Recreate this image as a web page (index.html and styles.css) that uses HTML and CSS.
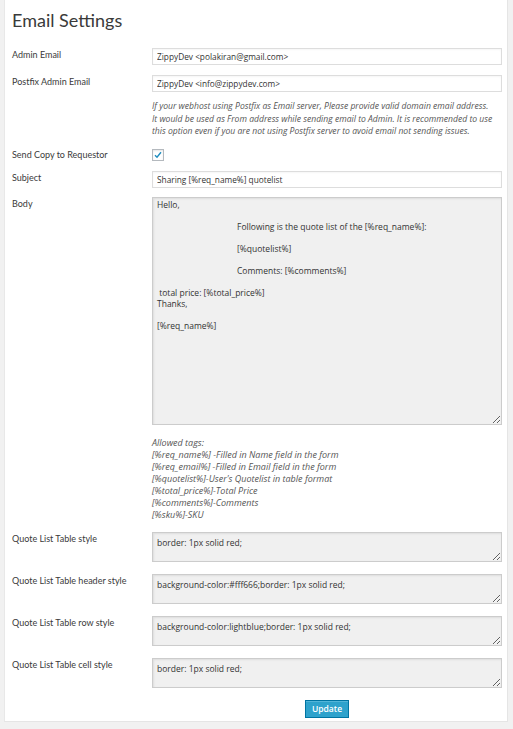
FILE: index.html
```html
<!DOCTYPE html>
<html>
<head>
<meta charset="utf-8">
<link rel="stylesheet" href="styles.css">
</head>
<body>
<div class="panel">
  <h1 class="title">Email Settings</h1>
  <form class="form">
    <div class="row r-admin">
      <label class="lbl">Admin Email</label>
      <div class="field"><input class="txt" type="text" value="ZippyDev <polakiran@gmail.com>"></div>
    </div>
    <div class="row r-postfix">
      <label class="lbl">Postfix Admin Email</label>
      <div class="field">
        <input class="txt" type="text" value="ZippyDev <info@zippydev.com>">
        <p class="desc">If your webhost using Postfix as Email server, Please provide valid domain email address.<br>It would be used as From address while sending email to Admin. It is recommended to use this option even if you are not using Postfix server to avoid email not sending issues.</p>
      </div>
    </div>
    <div class="row r-copy">
      <label class="lbl">Send Copy to Requestor</label>
      <div class="field"><span class="check"><svg width="8" height="8" viewBox="0 0 8 8"><path d="M1 4.3 L3 6.3 L7 1.2" fill="none" stroke="#1e8cbe" stroke-width="1.4"/></svg></span></div>
    </div>
    <div class="row r-subject">
      <label class="lbl">Subject</label>
      <div class="field"><input class="txt" type="text" value="Sharing [%req_name%] quotelist"></div>
    </div>
    <div class="row r-body">
      <label class="lbl">Body</label>
      <div class="field">
        <textarea class="area body-area">Hello,

	Following is the quote list of the [%req_name%]:

	[%quotelist%]

	Comments: [%comments%]

 total price: [%total_price%]
Thanks,

[%req_name%]</textarea>
        <p class="tags">Allowed tags:<br>[%req_name%] -Filled in Name field in the form<br>[%req_email%] -Filled in Email field in the form<br>[%quotelist%]-User's Quotelist in table format<br>[%total_price%]-Total Price<br>[%comments%]-Comments<br>[%sku%]-SKU</p>
      </div>
    </div>
    <div class="row r-style">
      <label class="lbl">Quote List Table style</label>
      <div class="field"><textarea class="area small">border: 1px solid red;</textarea></div>
    </div>
    <div class="row r-style">
      <label class="lbl">Quote List Table header style</label>
      <div class="field"><textarea class="area small">background-color:#fff666;border: 1px solid red;</textarea></div>
    </div>
    <div class="row r-style">
      <label class="lbl">Quote List Table row style</label>
      <div class="field"><textarea class="area small">background-color:lightblue;border: 1px solid red;</textarea></div>
    </div>
    <div class="row r-style">
      <label class="lbl">Quote List Table cell style</label>
      <div class="field"><textarea class="area small">border: 1px solid red;</textarea></div>
    </div>
    <div class="actions">
      <span></span>
      <div class="btnwrap"><button type="button" class="btn">Update</button></div>
    </div>
  </form>
</div>
</body>
</html>
```
FILE: styles.css
```css
html, body {
  margin: 0;
  padding: 0;
  background: #f1f1f1;
}
body {
  width: 513px;
  height: 729px;
  overflow: hidden;
}
.panel {
  margin-left: 4px;
  width: 504px;
  height: 722px;
  background: #fff;
  box-sizing: border-box;
  border-right: 1px solid #e5e5e5;
  border-bottom: 1px solid #e5e5e5;
  border-left: 1px solid #e8e8e8;
  padding: 0 6px 0 7px;
}
.title {
  margin: 0;
  padding-top: 9px;
  height: 48px;
  box-sizing: border-box;
  font-family: "Lato", "Open Sans", sans-serif;
  font-weight: 400;
  font-size: 18px;
  line-height: 22px;
  color: #3a3a3a;
}
.form {
  margin: 0;
}
.row {
  display: grid;
  grid-template-columns: 140px 350px;
}
.lbl {
  font-family: "Lato", "Open Sans", sans-serif;
  font-size: 9px;
  line-height: 12px;
  color: #3a3a3a;
  padding-top: 1px;
}
.field {
  display: flex;
  flex-direction: column;
  min-width: 0;
}
.txt {
  box-sizing: border-box;
  width: 350px;
  height: 17px;
  margin: 0;
  border: 1px solid #ddd;
  box-shadow: inset 0 1px 2px rgba(0,0,0,.04);
  background: #fff;
  padding: 0 4px;
  font-family: "Open Sans", sans-serif;
  font-size: 8.3px;
  color: #333;
  outline: none;
}
.r-admin { margin-bottom: 10px; }
.r-postfix { margin-bottom: 11px; }
.desc {
  margin: 8px 0 0;
  width: 352px;
  font-family: "Open Sans", sans-serif;
  font-style: italic;
  font-size: 8.6px;
  line-height: 12.5px;
  color: #555;
}
.r-copy { margin-bottom: 10px; }
.r-copy .lbl { padding-top: 0; }
.check {
  display: flex;
  align-items: center;
  justify-content: center;
  width: 12px;
  height: 12px;
  box-sizing: border-box;
  border: 1px solid #b4b9be;
  background: #fff;
  box-shadow: inset 0 1px 2px rgba(0,0,0,.1);
}
.r-subject { margin-bottom: 9px; }
.area {
  box-sizing: border-box;
  width: 350px;
  margin: 0;
  border: 1px solid #ccc;
  box-shadow: inset 1px 1px 2px rgba(0,0,0,.08);
  background: #f0f0f0;
  font-family: "Open Sans", sans-serif;
  font-size: 8.5px;
  line-height: 11px;
  color: #333;
  padding: 2px 4px;
  outline: none;
  display: block;
}
.body-area {
  height: 228px;
  padding-top: 1px;
  tab-size: 80px;
  -moz-tab-size: 80px;
  white-space: pre-wrap;
}
.tags {
  margin: 12px 0 0;
  font-family: "Open Sans", sans-serif;
  font-style: italic;
  font-size: 9px;
  line-height: 12px;
  color: #555;
}
.r-body { margin-bottom: 11px; }
.small {
  height: 30px;
  padding-top: 4px;
}
.r-style { margin-bottom: 12px; }
.actions {
  display: grid;
  grid-template-columns: 140px 350px;
}
.btnwrap {
  display: flex;
  justify-content: center;
}
.btn {
  height: 18px;
  width: 44px;
  padding: 0;
  background: #2ea2cc;
  border: 1px solid #0074a2;
  box-shadow: inset 0 1px 0 rgba(120,200,230,.5);
  color: #fff;
  font-family: "Open Sans", sans-serif;
  font-size: 8.5px;
  font-weight: 600;
  line-height: 16px;
}
```
